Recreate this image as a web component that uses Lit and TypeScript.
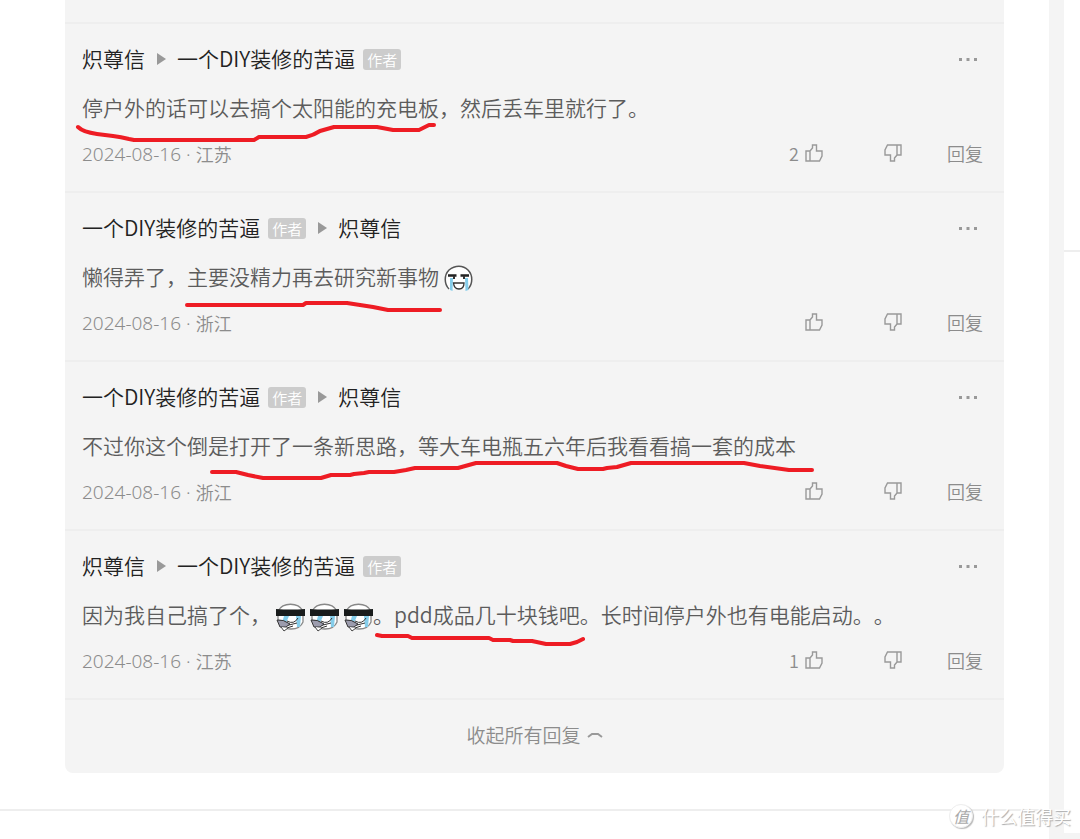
import { LitElement, html, svg, css, nothing } from "lit";
import { customElement, property } from "lit/decorators.js";

type Part = string | { face: "cry" | "masked" };
interface Comment {
  from: string;
  to: string;
  authorFirst: boolean;
  body: Part[];
  place: string;
  likes?: number;
  stroke: string;
}

const OWNER = "一个DIY装修的苦逼";
const GUEST = "炽尊信";

const comments: Comment[] = [
  {
    from: GUEST, to: OWNER, authorFirst: false, place: "江苏", likes: 2,
    body: ["停户外的话可以去搞个太阳能的充电板，然后丢车里就行了。"],
    stroke: "M13 105 Q18 110 32 112 L48 114 Q56 115 64 117 L69 118 H189 L194 115 H241 Q249 113 255 109 L269 105 H312 L328 108 H354 L364 103 H369",
  },
  {
    from: OWNER, to: GUEST, authorFirst: true, place: "浙江",
    body: ["懒得弄了，主要没精力再去研究新事物", { face: "cry" }],
    stroke: "M122 114 H238 L241 112 H282 L308 116 L323 119 H375",
  },
  {
    from: OWNER, to: GUEST, authorFirst: true, place: "浙江",
    body: ["不过你这个倒是打开了一条新思路，等大车电瓶五六年后我看看搞一套的成本"],
    stroke: "M147 112 H171 L183 115 L198 118 H256 L266 115 H285 L289 114 L299 113 L304 112 H329 L341 110 L350 108 H393 L411 103 H492 L501 106 L513 109 H538 L542 108 L552 107 L566 103 H679 L695 106 L724 110 H747",
  },
  {
    from: GUEST, to: OWNER, authorFirst: false, place: "江苏", likes: 1,
    body: ["因为我自己搞了个，", { face: "masked" }, { face: "masked" }, { face: "masked" }, "。pdd成品几十块钱吧。长时间停户外也有电能启动。。"],
    stroke: "M312 106 L317 107 H343 L347 109 H424 L428 111 H445 L448 112 H467 L481 115 H505 L512 113 L518 110",
  },
];

const cryFace = svg`
  <path d="M5 24C0 19 0 10 5 5C11 0 19 0 24 5C29 10 29 19 24 24" fill="#fff" stroke="#555" stroke-width="1.5"/>
  <path d="M4 10.500H12.500M16.500 10.500H25" stroke="#222" stroke-width="2.500"/>
  <path d="M10 11V14M20 11V14" stroke="#333" stroke-width="2"/>
  <path d="M6 13H9L8.500 26L6 25ZM21 13H24L24.500 25L21.500 26Z" fill="#85cdea"/>
  <path d="M9.500 18H20Q20 24 15 24Q10 24 9.500 18Z" fill="#fff" stroke="#333" stroke-width="1.300"/>`;

const maskedFace = svg`
  <path d="M2 8C7-1 22-1 27 8V19C25 24 20 26 15 26C7 26 2 21 2 15Z" fill="#fff" stroke="#888" stroke-width="1.3"/>
  <path d="M8 13H13L10 20H6ZM20 13H25L24 24H21Z" fill="#85cdea"/>
  <path d="M11 18Q18 22 22 15M9 23L21 20M8 26L17 23" fill="none" stroke="#333"/>
  <path d="M1 17Q7 16 14 21L10 24H4Z" fill="#9c9cad" stroke="#333" stroke-width="1"/>
  <path d="M5 24L8 28L12 25" fill="#fff" stroke="#444"/>
  <path d="M0 6Q15 7 29 6V13H0Z" fill="#191c1c"/>`;

const thumb = svg`<path d="M1 7H5V17H1ZM5 17H14.500L17 12V7H11.500V1H7.500V4L5 7"/>`;

@customElement("comment-item")
class CommentItem extends LitElement {
  @property({ attribute: false }) data!: Comment;

  static styles = css`
    :host { display: block; position: relative; border-top: 2px solid #eeeeee; padding: 20px 21px 22px 17px; }
    .head, .meta, .names, .actions, .place { display: flex; align-items: center; }
    .head { justify-content: space-between; height: 30px; }
    .names { gap: 8px; }
    .name { color: #222; text-decoration: none; font-size: 21px; line-height: 28px; padding-bottom: 2px; }
    .badge { background: #ccc; color: #fff; border-radius: 3px; font-size: 15px; line-height: 21px; padding: 0 4px; }
    .arrow { width: 16px; height: 14px; fill: #999; }
    .body { margin: 17px 0 14px; color: #5c5c5c; font-size: 21px; line-height: 32px; }
    .face { width: 29px; height: 29px; margin: -6px 0 -6px 5px; vertical-align: -3px; }
    .meta { justify-content: space-between; height: 32px; color: #8c8c8c; font-size: 18px; }
    .place { padding-top: 2px; }
    .date, .dot { font-family: "Noto Sans", sans-serif; font-size: 19px; }
    .dot { margin: 0 5px; }
    button { font: inherit; color: inherit; background: none; border: 0; padding: 0; display: flex; align-items: center; gap: 6px; cursor: pointer; }
    .actions { line-height: 30px; }
    .down { margin: 0 45px 0 61px; }
    .icon { width: 18px; height: 18px; fill: none; stroke: #999; stroke-width: 1.4; }
    .flip { transform: rotate(180deg); }
    .dots { width: 18px; height: 18px; fill: #999; margin-right: 6px; }
    .stroke { position: absolute; left: 0; top: -2px; width: 100%; height: 100%; overflow: visible; pointer-events: none; fill: none; stroke: #ee1c24; stroke-width: 4; stroke-linecap: round; stroke-linejoin: round; }
  `;

  render() {
    const c = this.data;
    const badge = html`<span class="badge">作者</span>`;
    return html`
      <div class="head">
        <div class="names">
          <a class="name" href="#">${c.from}</a>
          ${c.authorFirst ? badge : nothing}
          <svg class="arrow" viewBox="0 0 16 14"><path d="M4 1L13 7L4 13Z"/></svg>
          <a class="name" href="#">${c.to}</a>
          ${c.authorFirst ? nothing : badge}
        </div>
        <button aria-label="更多"><svg class="dots" viewBox="0 0 18 18"><path d="M0 8h3v3H0zM7.500 8h3v3h-3zM15 8h3v3h-3z"/></svg></button>
      </div>
      <p class="body">${c.body.map((p) => typeof p === "string" ? p
        : html`<svg class="face" viewBox="0 0 29 29">${p.face === "cry" ? cryFace : maskedFace}</svg>`)}</p>
      <div class="meta">
        <span class="place"><time class="date">2024-08-16</time><span class="dot">·</span>${c.place}</span>
        <div class="actions">
          <button aria-label="赞">${c.likes ?? nothing}<svg class="icon" viewBox="0 0 18 18">${thumb}</svg></button>
          <button class="down" aria-label="踩"><svg class="icon flip" viewBox="0 0 18 18">${thumb}</svg></button>
          <button>回复</button>
        </div>
      </div>
      <svg class="stroke" aria-hidden="true"><path d=${c.stroke}/></svg>`;
  }
}

@customElement("app-root")
class AppRoot extends LitElement {
  static styles = css`
    :host { display: grid; grid-template-columns: minmax(0, 1fr) 16px; column-gap: 15px; position: relative; min-height: 100vh; box-sizing: border-box; background: #f4f4f4; font-family: "Noto Sans CJK SC", sans-serif; font-weight: 350; text-spacing-trim: space-all; overflow: hidden; }
    .main { background: #fff; }
    .article { padding: 0 45px 36px 65px; border-bottom: 2px solid #eeeeee; }
    .thread { background: #f4f4f4; border-radius: 0 0 8px 8px; padding-top: 22px; }
    .fold { display: flex; align-items: center; justify-content: center; gap: 6px; width: 100%; height: 75px; padding: 0 0 4px; border: 0; border-top: 2px solid #eeeeee; background: none; color: #8c8c8c; font: inherit; font-size: 19px; cursor: pointer; }
    .chevron { width: 16px; height: 8px; fill: none; stroke: #999; stroke-width: 2; }
    .side { background: #fff; margin-bottom: 6px; }
    .widget { height: 250px; border-bottom: 2px solid #eeeeee; }
    .mark { position: absolute; right: 9px; bottom: 9px; display: flex; align-items: center; gap: 8px; font-size: 18px; line-height: 28px; font-weight: 400; color: #fff; text-shadow: 1px 1px 1px #aaa; }
    .seal { width: 22px; height: 22px; line-height: 22px; text-align: center; font-size: 16px; font-style: italic; border: 1px solid #eee; border-radius: 50%; background: #fff; color: #aaa; text-shadow: none; box-shadow: 1px 1px 1px #bbb; }
  `;

  render() {
    return html`
      <main class="main">
        <div class="article">
          <section class="thread">
            ${comments.map((c) => html`<comment-item .data=${c}></comment-item>`)}
            <button class="fold">收起所有回复<svg class="chevron" viewBox="0 0 16 8"><path d="M1 6L5 3H11L15 6"/></svg></button>
          </section>
        </div>
      </main>
      <aside class="side"><div class="widget"></div></aside>
      <div class="mark"><span class="seal">值</span><span>什么值得买</span></div>`;
  }
}
